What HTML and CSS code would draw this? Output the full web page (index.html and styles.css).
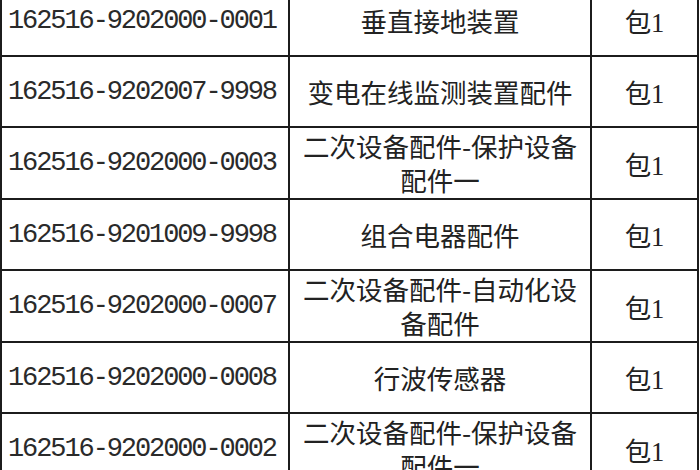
FILE: index.html
```html
<!DOCTYPE html>
<html lang="zh">
<head>
<meta charset="utf-8">
<title>配件清单</title>
<link rel="stylesheet" href="styles.css">
</head>
<body>
<div class="viewport">
  <div class="sheet">
    <div class="cell code">162516-9202000-0001</div>
    <div class="cell name">垂直接地装置</div>
    <div class="cell qty">包1</div>

    <div class="cell code">162516-9202007-9998</div>
    <div class="cell name">变电在线监测装置配件</div>
    <div class="cell qty">包1</div>

    <div class="cell code">162516-9202000-0003</div>
    <div class="cell name">二次设备配件-保护设备配件一</div>
    <div class="cell qty">包1</div>

    <div class="cell code">162516-9201009-9998</div>
    <div class="cell name">组合电器配件</div>
    <div class="cell qty">包1</div>

    <div class="cell code">162516-9202000-0007</div>
    <div class="cell name">二次设备配件-自动化设备配件</div>
    <div class="cell qty">包1</div>

    <div class="cell code">162516-9202000-0008</div>
    <div class="cell name">行波传感器</div>
    <div class="cell qty">包1</div>

    <div class="cell code">162516-9202000-0002</div>
    <div class="cell name">二次设备配件-保护设备配件一</div>
    <div class="cell qty">包1</div>
  </div>
</div>
</body>
</html>
```

FILE: styles.css
```css
html, body {
  margin: 0;
  padding: 0;
  background: #ffffff;
}

.viewport {
  width: 700px;
  height: 470px;
  overflow: hidden;
}

.sheet {
  margin-top: -16px;
  width: 695px;
  padding: 2px;
  background: #1c1c1c;
  display: grid;
  grid-template-columns: 286px 300px 105px;
  grid-template-rows: 69px 69px 70px 69px 70px 69px 70px;
  gap: 2px;
}

.cell {
  background: #ffffff;
  color: #222222;
  display: flex;
  align-items: center;
  justify-content: center;
  text-align: center;
  box-sizing: border-box;
}

.code {
  font-family: "Liberation Mono", "DejaVu Sans Mono", monospace;
  font-size: 27px;
  letter-spacing: -2.1px;
  padding-right: 6px;
  color: #2a2a2a;
}

.name {
  font-family: "Noto Sans CJK SC", sans-serif;
  font-size: 26.5px;
  line-height: 34px;
  padding: 0 8px;
}

.qty {
  font-family: "Liberation Serif", "Noto Sans CJK SC", serif;
  font-size: 26.5px;
}
```
